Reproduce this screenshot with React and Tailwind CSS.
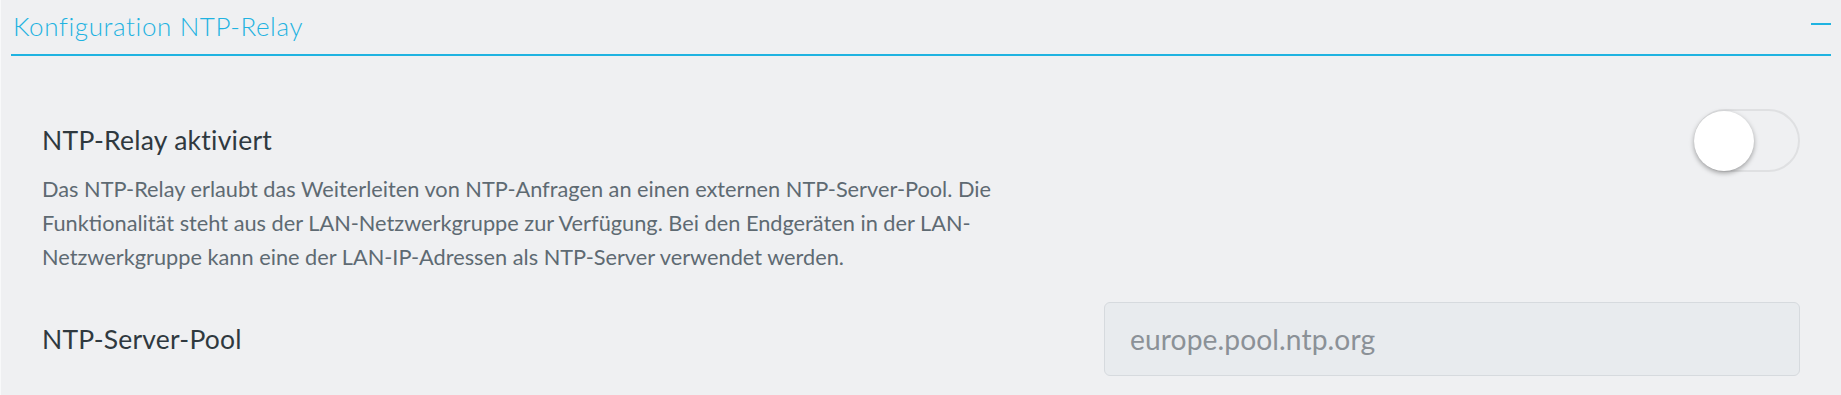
import React from "react";

export default function App() {
  return (
    <div className="w-[1841px] h-[395px] bg-[#eff0f2] border-l border-[#f8f9fa] font-['Lato','Open_Sans',sans-serif] overflow-hidden">
      {/* Header */}
      <div className="mx-[10px] h-[56px] border-b-2 border-[#1fb3e1] flex justify-between items-start">
        <div className="pt-[10px] pl-[2px] leading-[32px] text-[26px] tracking-[0.6px] font-light text-[#1fb3e1]">
          Konfiguration NTP-Relay
        </div>
        <div className="mt-[23px] w-[20px] h-[2px] bg-[#1fb3e1]" />
      </div>

      {/* Content */}
      <div className="pl-[41px] pr-[41px]">
        <div className="mt-[53px] flex justify-between items-start">
          <div className="pt-[15px]">
            <div className="text-[26.5px] leading-[32px] tracking-[0.25px] text-[#2f393f]">NTP-Relay aktiviert</div>
            <p className="mt-[16px] text-[21.75px] leading-[34px] text-[#5e6a72]">
              Das NTP-Relay erlaubt das Weiterleiten von NTP-Anfragen an einen externen NTP-Server-Pool. Die
              <br />
              Funktionalität steht aus der LAN-Netzwerkgruppe zur Verfügung. Bei den Endgeräten in der LAN-
              <br />
              Netzwerkgruppe kann eine der LAN-IP-Adressen als NTP-Server verwendet werden.
            </p>
          </div>
          <div className="relative w-[106px] h-[63px] rounded-full border-2 border-[#dfe0e2]">
            <div className="absolute left-[-2px] top-[0px] w-[60px] h-[60px] rounded-full bg-white shadow-[0_2px_5px_rgba(0,0,0,0.35)]" />
          </div>
        </div>

        <div className="mt-[28px] flex justify-between items-center">
          <div className="text-[26.5px] leading-[32px] tracking-[0.2px] text-[#2f393f]">NTP-Server-Pool</div>
          <div className="w-[696px] h-[74px] rounded-[6px] border border-[#d6dade] bg-[#e8ebee] flex items-center pl-[25px]">
            <span className="text-[28.2px] tracking-[0.1px] text-[#8b9197]">europe.pool.ntp.org</span>
          </div>
        </div>
      </div>
    </div>
  );
}
